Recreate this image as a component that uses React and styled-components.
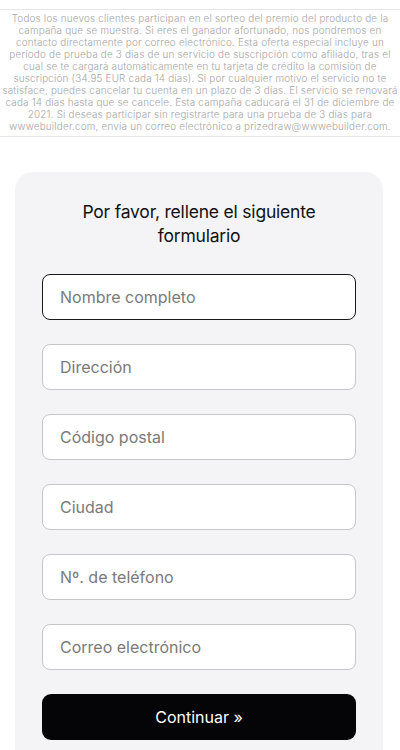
import React from 'react';
import styled, { createGlobalStyle } from 'styled-components';

const GlobalStyle = createGlobalStyle`
  body {
    margin: 0;
    background: #ffffff;
    font-family: Inter, "Noto Sans", sans-serif;
  }
`

const disclaimerLines = [
  'Todos los nuevos clientes participan en el sorteo del premio del producto de la',
  'campaña que se muestra. Si eres el ganador afortunado, nos pondremos en',
  'contacto directamente por correo electrónico. Esta oferta especial incluye un',
  'periodo de prueba de 3 días de un servicio de suscripción como afiliado, tras el',
  'cual se te cargará automáticamente en tu tarjeta de crédito la comisión de',
  'suscripción (34.95 EUR cada 14 días). Si por cualquier motivo el servicio no te',
  'satisface, puedes cancelar tu cuenta en un plazo de 3 días. El servicio se renovará',
  'cada 14 días hasta que se cancele. Esta campaña caducará el 31 de diciembre de',
  '2021. Si deseas participar sin registrarte para una prueba de 3 días para',
  'wwwebuilder.com, envía un correo electrónico a prizedraw@wwwebuilder.com.',
];

const fields = [
  'Nombre completo',
  'Dirección',
  'Código postal',
  'Ciudad',
  'Nº. de teléfono',
  'Correo electrónico',
];

const App = () => {
  return (
    <Page>
      <GlobalStyle />
      <TopEdge />
      <Disclaimer>
        {disclaimerLines.map(line => <Line key={line}>{line}</Line>)}
      </Disclaimer>
      <Card>
        <Title>Por favor, rellene el siguiente formulario</Title>
        <Form>
          {fields.map((f, i) => (
            <Field key={f} placeholder={f} focused={i === 0} autoFocus={i === 0} />
          ))}
          <Submit type='button'>Continuar »</Submit>
        </Form>
      </Card>
    </Page>
  );
}

const Page = styled.div`
  display: flex;
  flex-direction: column;
  width: 400px;
  height: 750px;
  overflow: hidden;
`

const TopEdge = styled.div`
  width: 205px;
  height: 1px;
  margin-left: 70px;
  background: #e2e2e2;
`

const Disclaimer = styled.div`
  margin: 9px 0 0;
  padding: 2px 0 4px;
  border-top: 1px solid #e6e6e6;
  border-bottom: 1px solid #e6e6e6;
  font-size: 9.9px;
  font-weight: 300;
  line-height: 12px;
  letter-spacing: 0.2px;
  color: #a6a6a6;
  text-align: center;
`

const Line = styled.div`
  white-space: nowrap;
`

const Card = styled.div`
  margin: 35px 17px 0 15px;
  padding: 28px 27px 40px;
  background: #f4f4f6;
  border-radius: 18px;
`

const Title = styled.h2`
  margin: 0 auto 26px;
  max-width: 280px;
  font-size: 17.5px;
  font-weight: 400;
  line-height: 24px;
  letter-spacing: -0.2px;
  color: #111;
  text-align: center;
`

const Form = styled.form`
  display: flex;
  flex-direction: column;
  gap: 24px;
`

const Field = styled.input`
  box-sizing: border-box;
  height: 46px;
  width: 100%;
  padding: 0 17px;
  border: ${props => props.focused ? '1.5px solid #1a1a1a' : '1px solid #c6c6c8'};
  border-radius: 8px;
  background: #fff;
  font-family: Inter, "Noto Sans", sans-serif;
  font-size: 16px;
  color: #111;
  outline: none;
  &::placeholder {
    color: #7a7a7a;
  }
`

const Submit = styled.button`
  height: 46px;
  border: none;
  border-radius: 9px;
  background: #050508;
  color: #fff;
  font-family: Inter, "Noto Sans", sans-serif;
  font-size: 16px;
  cursor: pointer;
`

export default App;
